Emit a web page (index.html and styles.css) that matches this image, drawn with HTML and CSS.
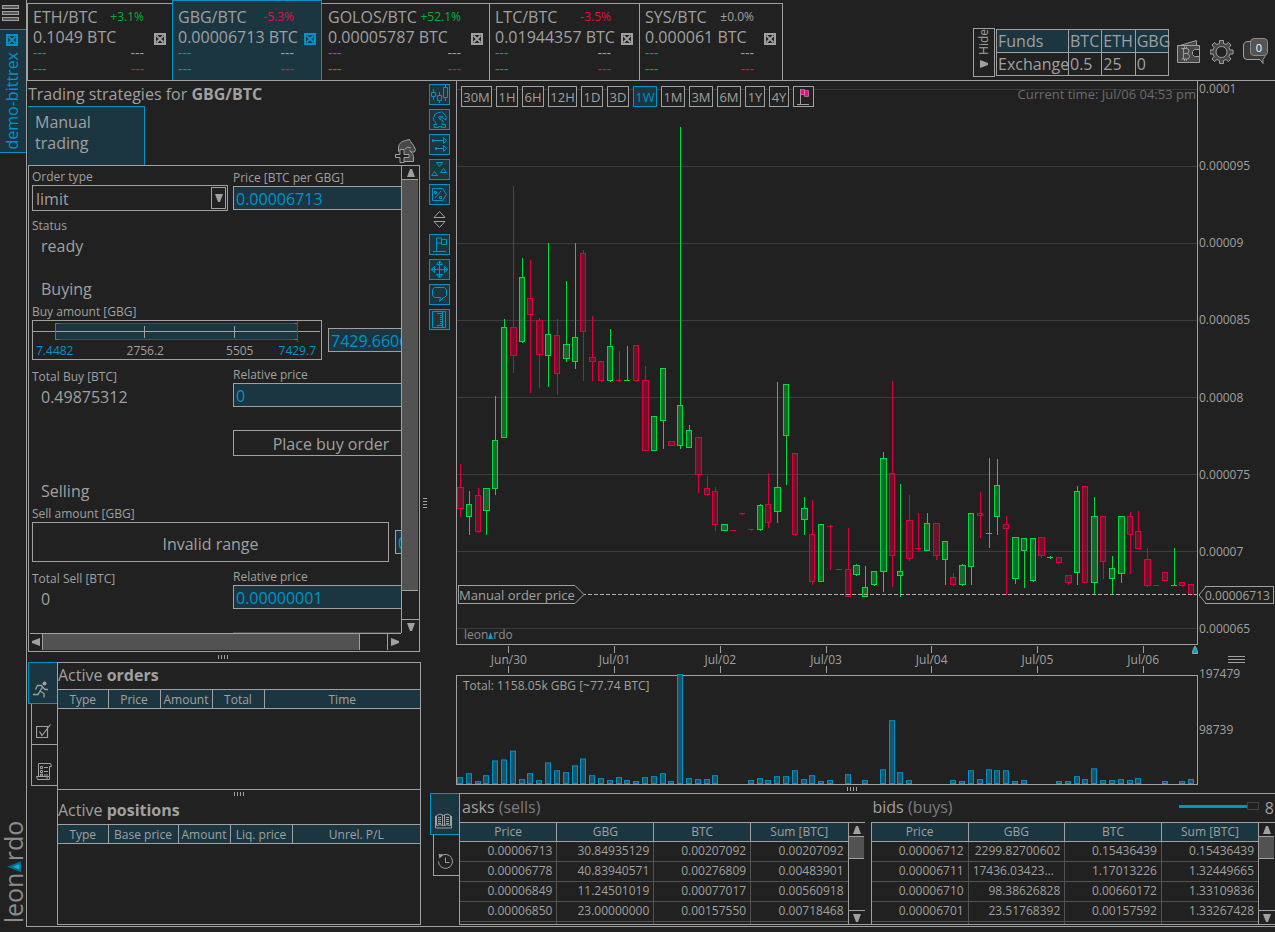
FILE: index.html
```html
<!DOCTYPE html>
<html lang="en">
<head>
<meta charset="utf-8">
<title>Leonardo – GBG/BTC</title>
<link rel="stylesheet" href="styles.css">
</head>
<body>
<svg class="defs" width="0" height="0" aria-hidden="true">
  <symbol id="i-close" viewBox="0 0 12 12"><path d="M1 1h10v10h-10z" fill="none" stroke="currentColor" stroke-width="2" shape-rendering="crispEdges"/><path d="M2.5 2.5l7 7M9.5 2.5l-7 7" stroke="currentColor" stroke-width="1.8"/></symbol>
  <symbol id="i-up" viewBox="0 0 8 8"><path d="M3 0h2l3 8h-8z" fill="currentColor"/></symbol>
  <symbol id="i-down" viewBox="0 0 8 8"><path d="M0 0h8l-3 8h-2z" fill="currentColor"/></symbol>
  <symbol id="i-left" viewBox="0 0 8 8"><path d="M8 0v8l-8 -3v-2z" fill="currentColor"/></symbol>
  <symbol id="i-right" viewBox="0 0 8 8"><path d="M0 0v8l8 -3v-2z" fill="currentColor"/></symbol>
  <symbol id="i-book" viewBox="0 0 17 16"><g fill="none" stroke="currentColor"><path d="M1.500 2.500q3.500-3 7 0q3.500-3 7 0v10q-3.500-1.500-7 0q-3.500-1.500-7 0zM7.500 2v11M9.500 2v11M.500 3v12h16v-12"/><path d="M3 4.500h3M3 6.500h3M3 8.500h3M11 4.500h3M11 6.500h3M11 8.500h3M3 10.500h3M11 10.500h3"/></g></symbol>
  <symbol id="i-history" viewBox="0 0 17 17"><path d="M3.500 3.500a7 7 0 1 1-2 5M8.500 4.500v5h4" fill="none" stroke="currentColor"/><path d="M1.500 1l5 .5l-4 4z" fill="currentColor"/></symbol>
</svg>
<div class="page">
  <aside class="rail">
    <button class="menu" aria-label="Menu"><span></span><span></span><span></span></button>
    <div class="account">
      <button class="close" aria-label="Close account"><svg width="12" height="12"><use href="#i-close"/></svg></button>
      <a class="account-name" href="#account">demo-bittrex</a>
    </div>
    <div class="logo"><span>leon</span><svg width="14" height="11" viewBox="0 0 14 11"><path d="M0 0V11L14 5.500z" fill="#00708f"/><path d="M2 3v5l6-2.500z" fill="#00b4e6"/></svg><span>rdo</span></div>
  </aside>

  <div class="app">
    <header class="header">
      <nav class="pairs">
        <div class="pair w-145"><div class="pair-info"><div class="row"><a href="#eth">ETH/BTC</a><small class="up">+3.1%</small></div><div class="rate">0.1049 BTC</div><div class="row dash"><span class="blue">---</span><span>---</span></div><div class="row dash"><span class="up">---</span><span class="down">---</span></div></div><button class="close" aria-label="Close ETH/BTC"><svg width="12" height="12"><use href="#i-close"/></svg></button></div>
        <div class="pair active w-150"><div class="pair-info"><div class="row"><a href="#gbg">GBG/BTC</a><small class="down">-5.3%</small></div><div class="rate">0.00006713 BTC</div><div class="row dash"><span class="blue">---</span><span>---</span></div><div class="row dash"><span class="up">---</span><span class="down">---</span></div></div><button class="close" aria-label="Close GBG/BTC"><svg width="12" height="12"><use href="#i-close"/></svg></button></div>
        <div class="pair w-167"><div class="pair-info"><div class="row"><a href="#golos">GOLOS/BTC</a><small class="up">+52.1%</small></div><div class="rate">0.00005787 BTC</div><div class="row dash"><span class="blue">---</span><span>---</span></div><div class="row dash"><span class="up">---</span><span class="down">---</span></div></div><button class="close" aria-label="Close GOLOS/BTC"><svg width="12" height="12"><use href="#i-close"/></svg></button></div>
        <div class="pair w-150"><div class="pair-info"><div class="row"><a href="#ltc">LTC/BTC</a><small class="down">-3.5%</small></div><div class="rate">0.01944357 BTC</div><div class="row dash"><span class="blue">---</span><span>---</span></div><div class="row dash"><span class="up">---</span><span class="down">---</span></div></div><button class="close" aria-label="Close LTC/BTC"><svg width="12" height="12"><use href="#i-close"/></svg></button></div>
        <div class="pair w-144"><div class="pair-info"><div class="row"><a href="#sys">SYS/BTC</a><small>±0.0%</small></div><div class="rate">0.000061 BTC</div><div class="row dash"><span class="blue">---</span><span>---</span></div><div class="row dash"><span class="up">---</span><span class="down">---</span></div></div><button class="close" aria-label="Close SYS/BTC"><svg width="12" height="12"><use href="#i-close"/></svg></button></div>
      </nav>
      <div class="status">
        <button class="hide-btn"><span>Hide</span><svg width="8" height="8"><use href="#i-right"/></svg></button>
        <table class="funds">
          <thead><tr><th class="w-72">Funds</th><th>BTC</th><th>ETH</th><th>GBG</th></tr></thead>
          <tbody><tr><td>Exchange</td><td>0.5</td><td>25</td><td>0</td></tr></tbody>
        </table>
        <button class="icon-btn" aria-label="Wallet"><svg width="24" height="24" viewBox="0 0 24 24"><g fill="#484848" stroke="#a0a0a0"><path d="M3 5.500L19.500 .5v5"/><path d="M.5 5.500h22v17h-22z"/><path d="M22.500 9.500h-5l-2 2v3l2 2h5z" fill="#212121"/><path d="M4.500 8.500h5q2.500 0 2.500 2.500t-2.500 2.500q3 0 3 3t-3 2.500h-5M6.500 8.500v10.500M6.500 13.500h3M7.500 6.500v2M9.500 6.500v2M7.500 19v2M9.500 19v2" fill="none"/></g></svg></button>
        <button class="icon-btn" aria-label="Settings"><svg width="24" height="24" viewBox="0 0 24 24"><path d="M9.500 .5h4v3l2.500 1l2.500-2l2.500 2.500l-2 2.500l1 2.500h3v4h-3l-1 2.500l2 2.500l-2.500 2.500l-2.500-2l-2.500 1v3h-4v-3l-2.500-1l-2.500 2l-2.500-2.500l2-2.500l-1-2.500h-3v-4h3l1-2.500l-2-2.500l2.500-2.500l2.500 2l2.500-1z" fill="#484848" stroke="#a0a0a0"/><circle cx="11.500" cy="12" r="5.500" fill="#212121" stroke="#a0a0a0"/></svg></button>
        <button class="icon-btn chat" aria-label="Messages"><svg width="24" height="24" viewBox="0 0 24 24"><path d="M5 1.500h14l3 3v12l-2 3v4l-3-4h-13q-3.500 0-3.500-3.500v-10q0-4.500 4.500-4.500z" fill="#383838" stroke="#a0a0a0"/></svg><span class="badge">0</span></button>
      </div>
    </header>

    <main class="main">
      <section class="left">
        <h2 class="title">Trading strategies for <b>GBG/BTC</b></h2>
        <div class="strategy-tabs">
          <button class="strategy-tab">Manual trading</button>
          <button class="icon-btn add" aria-label="Add strategy"><svg width="22" height="24" viewBox="0 0 22 24"><path d="M3.500 12.500V8q1-5.500 7-6.500l4-1l1 2l3 4l2 4l-1 2.500h-3l-2-1.500q4 3 4 6v5h-10" fill="#484848" stroke="#a0a0a0"/><path d="M10 10q2-3 6-1" fill="none" stroke="#a0a0a0"/><path d="M5 10.500h4v5h5v3h-5v5h-4v-5h-4.500v-3h4.500z" fill="#212121" stroke="#a0a0a0"/></svg></button>
        </div>
        <div class="panel scroll">
          <form class="view">
            <div class="cols">
              <div class="field"><label for="type">Order type</label><div class="select"><select id="type"><option>limit</option></select><span class="arrow"><svg width="8" height="8"><use href="#i-down"/></svg></span></div></div>
              <div class="field"><label for="price">Price [BTC per GBG]</label><input id="price" value="0.00006713"></div>
            </div>
            <div class="field state"><span class="cap">Status</span><output class="val">ready</output></div>
            <h3>Buying</h3>
            <label class="amount-label" for="buy">Buy amount [GBG]</label>
            <div class="amount">
              <div class="range">
                <svg class="track" viewBox="0 0 288 22" preserveAspectRatio="none"><path d="M22.500 2.500h242v16h-242z" fill="#1b3641" stroke="#0f6080"/><path d="M0 10.500h287M111.500 5v12M201.500 5v12" stroke="#a0a0a0"/><path d="M26 2.500h-3.500v16h3.500M261 2.500h3M261 18.500h3" fill="none" stroke="#0093c9"/><path d="M264.500 0v21" stroke="#e0008c"/></svg>
                <div class="scale"><span class="blue">7.4482</span><span>2756.2</span><span>5505</span><span class="blue">7429.7</span></div>
                <input type="range" aria-label="Buy amount" min="7" max="7430" value="7430">
              </div>
              <input id="buy" value="7429.66061">
            </div>
            <div class="cols total">
              <div class="field low"><span class="cap">Total Buy [BTC]</span><output class="val">0.49875312</output></div>
              <div class="field"><label for="rel1">Relative price</label><input id="rel1" value="0"></div>
            </div>
            <div class="cols action"><button type="button" class="order">Place buy order</button></div>
            <h3 class="sell">Selling</h3>
            <label class="amount-label" for="sell">Sell amount [GBG]</label>
            <div class="amount">
              <div class="invalid">Invalid range</div>
              <input id="sell" value="0">
            </div>
            <div class="cols total">
              <div class="field low"><span class="cap">Total Sell [BTC]</span><output class="val">0</output></div>
              <div class="field"><label for="rel2">Relative price</label><input id="rel2" value="0.00000001"></div>
            </div>
            <div class="cols action"><button type="button" class="order" disabled aria-label="Sell"></button></div>
          </form>
          <div class="vbar"><button aria-label="Up"><svg width="8" height="8"><use href="#i-up"/></svg></button><div class="thumb"></div><div class="rest"></div><button class="end" aria-label="Down"><svg width="8" height="8"><use href="#i-down"/></svg></button></div>
          <div class="hbar"><button aria-label="Left"><svg width="8" height="8"><use href="#i-left"/></svg></button><div class="thumb"></div><div class="rest"></div><button class="end" aria-label="Right"><svg width="8" height="8"><use href="#i-right"/></svg></button></div>
        </div>
        <div class="grip"></div>
        <div class="tabbed orders">
          <nav class="side-tabs">
            <button class="active" aria-label="Active orders"><svg width="16" height="17" viewBox="0 0 16 17"><circle cx="11.500" cy="2.500" r="2" fill="#a0a0a0"/><path d="M2.500 8.500l2-4h4l1 1.500l-2.500 4l4 2.500v4M9.500 6l2.500 2.500h3M7 10l-2 3.500h-5" fill="none" stroke="#a0a0a0" stroke-width="1.300"/></svg></button>
            <button aria-label="Completed orders"><svg width="16" height="15" viewBox="0 0 16 15"><path d="M.5 2.500h11v11h-11zM3.500 7.500l2.500 4l8.500-11" fill="none" stroke="#a0a0a0" stroke-width="1.200"/></svg></button>
            <button aria-label="Log"><svg width="16" height="17" viewBox="0 0 16 17"><path d="M2.500 13.500v-13h12l1 3h-2v10M.5 13.500h10l1 3h-10zM10.500 13.500h3v3h-2M4.500 3.500h2v2h-2zM4.500 7.500h2v2h-2zM4.500 11h2v2h-2zM8 4.500h4M8 8.500h4M8 12h4" fill="none" stroke="#a0a0a0"/></svg></button>
          </nav>
          <div class="order-lists">
            <div class="list">
              <h2 class="title">Active <b>orders</b></h2>
              <table class="heads"><thead><tr><th class="w-51">Type</th><th class="w-52">Price</th><th class="w-52">Amount</th><th class="w-52">Total</th><th>Time</th></tr></thead></table>
            </div>
            <div class="list second">
              <div class="grip"></div>
              <h2 class="title">Active <b>positions</b></h2>
              <table class="heads"><thead><tr><th class="w-51">Type</th><th class="w-70">Base price</th><th class="w-52">Amount</th><th class="w-62">Liq. price</th><th>Unrel. P/L</th></tr></thead></table>
            </div>
          </div>
        </div>
      </section>

      <div class="vgrip"><i></i></div>

      <section class="right">
        <div class="chart">
          <div class="tools">
            <button aria-label="Candles"><svg viewBox="0 0 19 19"><path d="M.5 7.500h4v4h-4zM6.500 10.500h4v5h-4zM12.500 2.500h4v10h-4zM2.500 4v3M2.500 12v3M8.500 7v3M8.500 16v2M14.500 0v2M14.500 13v3" transform="translate(1)"/></svg></button>
            <button aria-label="Strategy"><svg viewBox="0 0 19 19"><path d="M5.500 12.500q-2.500-2-2-5q1-4.500 5-5h2l1-1l1 1l3.500 3v4.500l-4-2.500l-3 1l4 2.500v1.500l-1 1v1h3.500v3h-4v-1h-3v1h-4.500v-3h2.500zM8 7.500q2-2 5-1"/></svg></button>
            <button aria-label="Order lines"><svg viewBox="0 0 19 19"><path d="M4 5.500h9M7 13.500h6M2.500 4.500h1v2h-1zM5.500 12.500h1v2h-1zM13.500 2.500l3 3l-3 3zM13.500 10.500l3 3l-3 3z"/></svg></button>
            <button aria-label="Trades"><svg viewBox="0 0 19 19"><path d="M6.500 2.500h6l-3 4zM1.500 15.500h6l-3-4zM10.500 12.500h6l-3-4z"/></svg></button>
            <button aria-label="Price tags"><svg viewBox="0 0 19 19"><path d="M2.500 3.500h10l4 6l-4 6h-10zM5 13l6-7M4.500 6.500h2v2h-2zM9.500 11.500h2v2h-2z"/></svg></button>
            <button class="plain" aria-label="Scale"><svg viewBox="0 0 19 19"><path d="M4 7.500h11l-5.500-6zM4 11.500h11l-5.500 6z"/></svg></button>
            <button aria-label="Flags"><svg viewBox="0 0 19 19"><path d="M3 16.500h13M6.500 16v-13h5v5h-5M11.500 4.500h5v5h-5z"/></svg></button>
            <button aria-label="Crosshair"><svg viewBox="0 0 19 19"><path d="M9.500 1v17M1 9.500h17M6.500 4.500h6l-3-3.500zM6.500 14.500h6l-3 3.500zM4.500 6.500v6l-3.500-3zM14.500 6.500v6l3.500-3z"/></svg></button>
            <button aria-label="Comments"><svg viewBox="0 0 19 19"><path d="M4.500 2.500h10l2 2v6l-2 2h-1l-4 4l1-4h-6l-2-2v-6z"/></svg></button>
            <button aria-label="Ruler"><svg viewBox="0 0 19 19"><path d="M2.500 1.500h13v16h-13zM12.500 2v15M7 3.500h5M10 5.500h2M10 7.500h2M10 9.500h2M10 11.500h2M10 13.500h2M7 15.500h5"/></svg></button>
          </div>
          <div class="plot">
            <svg id="candles" viewBox="0 0 740 563" preserveAspectRatio="none"></svg>
            <div class="periods">
              <button class="w-31">30M</button><button class="w-22">1H</button><button class="w-22">6H</button><button class="w-29">12H</button><button class="w-22">1D</button><button class="w-22">3D</button><button class="w-24 active">1W</button><button class="w-24">1M</button><button class="w-24">3M</button><button class="w-24">6M</button><button class="w-20">1Y</button><button class="w-20">4Y</button><button class="w-21" aria-label="News"><svg width="15" height="17" viewBox="0 0 15 17"><path d="M4.500 1v15M1 16.500h12" stroke="#a0a0a0"/><path d="M4.500 1.500h4v5h-4zM8.500 2.500h4v6h-4z" fill="#ff0096" stroke="#d090b0" stroke-width=".6"/></svg></button>
            </div>
            <div class="clock">Current time: Jul/06 04:53 pm</div>
            <div class="tag"><span>Manual order price</span><svg width="9" height="19" viewBox="0 0 9 19"><path d="M0 .5l9 9l-9 9" fill="#212121" stroke="#a0a0a0"/></svg></div>
            <div class="mark">leon<svg width="5" height="7" viewBox="0 0 5 7"><path d="M0 7h5l-2.500-7z" fill="#00a0d0"/></svg>rdo</div>
          </div>
          <div class="prices">
            <span>0.0001</span><span>0.000095</span><span>0.00009</span><span>0.000085</span><span>0.00008</span><span>0.000075</span><span>0.00007</span><span>0.000065</span>
            <div class="price-tag"><svg width="8" height="18" viewBox="0 0 8 18"><path d="M8 .5h-1l-7 8.500l7 8.500h1" fill="#212121" stroke="#a0a0a0"/></svg><span>0.00006713</span></div>
          </div>
          <div class="days"><span>Jun/30</span><span>Jul/01</span><span>Jul/02</span><span>Jul/03</span><span>Jul/04</span><span>Jul/05</span><span>Jul/06</span>
            <svg class="now" width="6" height="8" viewBox="0 0 6 8"><path d="M.5 7.500h5v-2l-2-5h-1l-2 5z" fill="#00a0d0" stroke="#a0a0a0"/></svg></div>
          <button class="axis-menu" aria-label="Chart menu"><span></span><span></span><span></span></button>
          <div class="volume">
            <svg id="bars" viewBox="0 0 740 110" preserveAspectRatio="none"></svg>
            <span>Total: 1158.05k GBG [~77.74 BTC]</span>
          </div>
          <div class="vol-axis"><span>197479</span><span>98739</span></div>
        </div>
        <div class="grip"></div>
        <div class="tabbed book">
          <nav class="side-tabs">
            <button class="active" aria-label="Order book"><svg width="17" height="16"><use href="#i-book"/></svg></button>
            <button aria-label="History"><svg width="17" height="17"><use href="#i-history"/></svg></button>
          </nav>
          <div class="books">
            <div class="side">
              <div class="side-head"><h2>asks <span>(sells)</span></h2></div>
              <div class="side-body">
                <div class="sheet"><table><thead><tr><th>Price</th><th>GBG</th><th>BTC</th><th>Sum [BTC]</th></tr></thead>
                <tbody>
                <tr><td>0.00006713</td><td>30.84935129</td><td>0.00207092</td><td>0.00207092</td></tr>
                <tr><td>0.00006778</td><td>40.83940571</td><td>0.00276809</td><td>0.00483901</td></tr>
                <tr><td>0.00006849</td><td>11.24501019</td><td>0.00077017</td><td>0.00560918</td></tr>
                <tr><td>0.00006850</td><td>23.00000000</td><td>0.00157550</td><td>0.00718468</td></tr>
                <tr><td></td><td></td><td></td><td></td></tr>
                </tbody></table></div>
                <div class="vbar small"><button aria-label="Up"><svg width="8" height="8"><use href="#i-up"/></svg></button><div class="thumb"></div><div class="rest"></div><button class="end" aria-label="Down"><svg width="8" height="8"><use href="#i-down"/></svg></button></div>
              </div>
            </div>
            <div class="side">
              <div class="side-head"><h2>bids <span>(buys)</span></h2><div class="depth"><input id="depth" type="range" min="1" max="8" value="8" aria-label="Precision"><label for="depth">8</label></div></div>
              <div class="side-body">
                <div class="sheet"><table><thead><tr><th>Price</th><th>GBG</th><th>BTC</th><th>Sum [BTC]</th></tr></thead>
                <tbody>
                <tr><td>0.00006712</td><td>2299.82700602</td><td>0.15436439</td><td>0.15436439</td></tr>
                <tr><td>0.00006711</td><td class="cut">17436.03423...</td><td>1.17013226</td><td>1.32449665</td></tr>
                <tr><td>0.00006710</td><td>98.38626828</td><td>0.00660172</td><td>1.33109836</td></tr>
                <tr><td>0.00006701</td><td>23.51768392</td><td>0.00157592</td><td>1.33267428</td></tr>
                <tr><td></td><td></td><td></td><td></td></tr>
                </tbody></table></div>
                <div class="vbar small"><button aria-label="Up"><svg width="8" height="8"><use href="#i-up"/></svg></button><div class="thumb"></div><div class="rest"></div><button class="end" aria-label="Down"><svg width="8" height="8"><use href="#i-down"/></svg></button></div>
              </div>
            </div>
          </div>
        </div>
      </section>
    </main>
  </div>
</div>
<script src="chart.js"></script>
</body>
</html>
```
FILE: styles.css
```css
:root {
  --bg: #212121;
  --line: #a0a0a0;
  --text: #a0a0a0;
  --blue: #0093c9;
  --teal: #1b3641;
  --thumb: #525252;
  --green: #00b432;
  --red: #e0103c;
}
* { box-sizing: border-box; }
body {
  margin: 0;
  background: var(--bg);
  color: var(--text);
  font: 16px/20px "Open Sans", "Noto Sans", sans-serif;
}
button, input, select { font: inherit; color: inherit; margin: 0; padding: 0; border-radius: 0; }
button { background: none; border: 0; cursor: pointer; }
a { color: inherit; text-decoration: none; }
h2, h3 { margin: 0; font-size: 16px; font-weight: 400; }
svg { display: block; flex: none; }
table { border-collapse: collapse; }
th { font-weight: 400; }
.defs { position: absolute; }
.blue { color: var(--blue); }
.up { color: var(--green); }
.down { color: var(--red); }

.page { display: flex; height: 100vh; min-height: 800px; padding-bottom: 5px; }
.rail { width: 26px; flex: none; display: flex; flex-direction: column; }
.menu { display: grid; gap: 2px; padding: 5px 7px 0 2px; height: 29px; align-content: start; }
.menu span { height: 4px; border: 1px solid var(--line); background: #555; }
.account { height: 124px; border: solid var(--blue); border-width: 1px 0; background: var(--teal); color: var(--blue); padding: 4px 3px 0 0; display: flex; flex-direction: column; align-items: center; gap: 6px; }
.account-name { writing-mode: vertical-rl; transform: rotate(180deg); line-height: 22px; }
.close { height: 12px; color: var(--line); }
.account .close, .active .close { color: var(--blue); }
.logo { margin-top: auto; padding-top: 4px; writing-mode: vertical-rl; transform: rotate(180deg); display: flex; align-items: center; font: 25px/26px "Open Sans", sans-serif; color: #8c8c8c; }
.logo svg { margin-right: 3px; }

.app { flex: 1; min-width: 0; display: flex; flex-direction: column; border: solid var(--line); border-width: 0 0 1px 1px; }
.header { height: 81px; flex: none; display: flex; justify-content: space-between; border-bottom: 1px solid var(--line); }
.pairs { display: flex; align-items: flex-end; }
.pair { display: flex; height: 77px; border: solid var(--line); border-width: 1px 0 0 1px; padding: 3px 6px 0 5px; gap: 10px; }
.pair:last-child { border-right-width: 1px; }
.pair.active { height: 80px; padding: 6px 5px 0; background: var(--teal); border-color: var(--blue); border-right-width: 1px; }
.pair.active + .pair { border-left: 0; padding-left: 6px; }
.pair .close { margin-top: 26px; }
.pair-info { flex: 1; min-width: 0; white-space: nowrap; }
.row { display: flex; justify-content: space-between; }
.row small { font-size: 12px; }
.dash { font-size: 14px; line-height: 16px; }
.rate { height: 18px; }
.w-144 { width: 144px; } .w-145 { width: 145px; } .w-150 { width: 150px; } .w-167 { width: 167px; }
.status { display: flex; align-items: center; padding: 24px 8px 0 0; }
.hide-btn { width: 22px; height: 49px; border: 1px solid var(--line); display: flex; flex-direction: column; align-items: center; justify-content: space-between; font-size: 12px; padding-bottom: 8px; margin-right: 1px; }
.hide-btn span { writing-mode: vertical-rl; transform: rotate(180deg); }
.funds { width: 173px; table-layout: fixed; margin-right: 8px; }
.funds th, .funds td { height: 23px; border: 1px solid var(--line); padding: 1px 0 0 1px; text-align: left; line-height: 21px; }
.funds th { background: var(--teal); }
.w-72 { width: 72px; }
.icon-btn { position: relative; margin-right: 9px; }
.icon-btn:last-child { margin-right: 0; }
.badge { position: absolute; right: -1px; top: -2px; width: 18px; height: 18px; border: 1px solid #8a8a8a; border-radius: 4px; background: #555; color: #fff; font-size: 11px; line-height: 17px; }

.main { flex: 1; min-height: 0; display: flex; padding: 0 0 1px 1px; }
.left { width: 393px; flex: none; display: flex; flex-direction: column; }
.title { line-height: 26px; height: 25px; flex: none; }
.strategy-tabs { height: 59px; flex: none; display: flex; justify-content: space-between; align-items: flex-end; }
.strategy-tab { width: 117px; height: 59px; background: var(--teal); border: solid var(--blue); border-width: 1px 1px 0 0; text-align: left; padding: 4px 50px 11px 7px; line-height: 21px; }
.strategy-tabs .add { margin-right: 4px; margin-bottom: 2px; }
.panel { border: 1px solid var(--line); width: 392px; flex: 1; min-height: 0; }
.scroll { display: grid; grid-template-columns: 1fr 18px; grid-template-rows: 1fr 18px; padding: 0 0 0 1px; }
.view { overflow: hidden; min-height: 0; padding: 3px 0 0 2px; }
.vbar, .hbar { display: flex; }
.vbar { flex-direction: column; border-left: 1px solid var(--line); }
.hbar { border-top: 1px solid var(--line); padding-bottom: 1px; }
.vbar button, .hbar button { display: grid; place-items: center; flex: none; }
.vbar button { height: 13px; }
.hbar button { width: 12px; }
.vbar .thumb { flex: 412; background: var(--thumb); border: solid var(--line); border-width: 1px 0; margin-right: 1px; }
.vbar .rest { flex: 28; }
.vbar .end { border-top: 1px solid var(--line); height: 14px; }
.hbar .thumb { flex: 319; background: var(--thumb); border: solid var(--line); border-width: 0 1px; }
.hbar .rest { flex: 27; }
.hbar .end { border-left: 1px solid var(--line); width: 14px; }
.cols { display: grid; grid-template-columns: 196px 196px; gap: 5px; align-items: center; }
.field { display: flex; flex-direction: column; }
label, .cap { font-size: 12px; line-height: 16px; }
.view input { height: 24px; width: 100%; background: var(--teal); border: 1px solid var(--line); color: var(--blue); padding: 2px 2px 0; }
.select { display: flex; border: 1px solid var(--line); height: 26px; }
.select select { appearance: none; flex: 1; background: none; border: 0; padding: 2px 3px 0; }
.arrow { width: 15px; border: 1px solid var(--line); margin: 1px; display: grid; place-items: center; }
.state { margin-top: 7px; }
.val { line-height: 24px; padding-left: 9px; }
h3 { line-height: 24px; padding-left: 9px; margin: 19px 0 3px; }
h3.sell { margin-top: 23px; }
.amount-label { display: block; }
.amount { display: flex; align-items: center; gap: 6px; }
.amount > input { width: 130px; flex: none; }
.range { width: 290px; flex: none; height: 40px; border: 1px solid var(--line); position: relative; }
.track { width: 100%; height: 22px; shape-rendering: crispEdges; }
.scale { display: flex; justify-content: space-between; font-size: 12px; line-height: 16px; padding: 0 5px 0 3px; }
.scale span:nth-child(2) { padding-left: 28px; }
.scale span:nth-child(3) { padding-left: 37px; }
.view .range input { position: absolute; inset: 0; height: 100%; opacity: 0; }
.invalid { width: 357px; flex: none; height: 40px; border: 1px solid var(--line); text-align: center; line-height: 42px; }
.total { margin-top: 7px; align-items: start; }
.low { padding-top: 2px; }
.action { margin-top: 21px; }
.order { grid-column: 2; height: 26px; border: 1px solid var(--line); padding-top: 2px; }
.order:disabled { border-color: #484848; }

.grip { height: 10px; flex: none; display: grid; place-items: center; }
.grip::before { content: ""; width: 10px; height: 4px; background: repeating-linear-gradient(90deg, var(--line) 0 1px, transparent 1px 3px); }
.left > .grip { padding-right: 3px; }
.vgrip { width: 8px; display: grid; place-items: center; flex: none; }
.vgrip i { width: 4px; height: 10px; background: repeating-linear-gradient(var(--line) 0 1px, transparent 1px 3px); }

.tabbed { display: flex; flex: none; }
.orders { height: 263px; }
.side-tabs { display: flex; flex-direction: column; align-items: flex-end; width: 29px; }
.side-tabs button { width: 26px; height: 41px; border: solid var(--line); border-width: 0 0 1px 1px; display: grid; place-items: end center; padding: 0 2px 5px 0; }
.side-tabs .active { width: 29px; height: 42px; background: var(--teal); border: 1px solid var(--blue); border-right: 0; padding-right: 4px; }
.order-lists { flex: 1; border: 1px solid var(--line); display: flex; flex-direction: column; }
.list { flex: 126; }
.second { flex: 135; border-top: 1px solid var(--line); }
.second .grip { height: 8px; }
.list > .title { height: 26px; line-height: 24px; }
.heads { width: 100%; table-layout: fixed; }
.heads th { height: 18px; border: solid var(--line); border-width: 1px 0 1px 1px; background: var(--teal); font-size: 12px; line-height: 17px; padding: 1px 0 0; }
.heads th:first-child { border-left: 0; }
.w-51 { width: 50px; } .w-52 { width: 52px; } .w-62 { width: 62px; } .w-70 { width: 70px; }

.right { flex: 1; min-width: 0; display: flex; flex-direction: column; }
.chart { flex: 1; min-height: 0; display: grid; grid-template-columns: 27px 1fr 77px; grid-template-rows: 1fr 30px 110px; }
.tools { grid-row: 1 / 4; display: flex; flex-direction: column; gap: 4px; padding-top: 3px; align-items: flex-start; }
.tools button { width: 21px; height: 21px; border: 1px solid var(--blue); background: var(--teal); color: var(--blue); }
.tools .plain { border-color: transparent; background: none; color: var(--line); }
.tools svg { width: 19px; height: 19px; fill: none; stroke: currentColor; }
.plot { position: relative; border: solid var(--line); border-width: 0 1px 1px; }
#candles, #bars { position: absolute; inset: 0; width: 100%; height: 100%; shape-rendering: crispEdges; overflow: visible; }
.grid { stroke: #3c3c3c; }
.gain { stroke: #00dc3c; fill: #00dc3c; }
.loss { stroke: #dc003c; fill: #dc003c; }
.gain rect, .loss rect { fill-opacity: .4; }
.order-line { stroke: #b0b0b0; stroke-dasharray: 4 2; }
.bar { fill: #14566c; stroke: var(--blue); }
.periods { position: absolute; left: 4px; top: 5px; display: flex; gap: 4px; }
.periods button { height: 21px; border: 1px solid var(--line); background: var(--bg); font-size: 13px; line-height: 20px; display: grid; place-items: center; }
.periods .active { color: var(--blue); border-color: var(--blue); background: var(--teal); }
.w-20 { width: 20px; } .w-21 { width: 21px; } .w-22 { width: 22px; } .w-24 { width: 24px; } .w-29 { width: 29px; } .w-31 { width: 31px; }
.clock { position: absolute; right: 1px; top: 4px; font-size: 13px; line-height: 18px; color: #6c6c6c; }
.tag { position: absolute; left: 1px; bottom: 40px; display: flex; font-size: 13px; line-height: 19px; }
.tag span { height: 19px; border: solid var(--line); border-width: 1px 0 1px 1px; background: var(--bg); }
.mark { position: absolute; left: 7px; bottom: 0; display: flex; align-items: center; font-size: 12px; line-height: 18px; color: #8c8c8c; }
.prices { position: relative; display: grid; grid-template-rows: repeat(7, 77fr) 24fr; font-size: 12px; line-height: 16px; padding-left: 1px; }
.price-tag { position: absolute; left: 1px; bottom: 41px; display: flex; background: var(--bg); }
.price-tag span { height: 18px; border: solid var(--line); border-width: 1px 1px 1px 0; padding-right: 3px; line-height: 18px; }
.price-tag svg { margin-right: -2px; }
.days { position: relative; display: flex; padding-right: 2px; font-size: 12px; line-height: 13px; }
.days span { flex: 1; display: flex; flex-direction: column; align-items: center; padding-top: 1px; }
.days span::before, .days span::after { content: ""; width: 1px; height: 7px; background: var(--line); }
.now { position: absolute; right: 0; top: 1px; }
.axis-menu { display: grid; gap: 2px; align-content: center; justify-content: center; padding-bottom: 1px; }
.axis-menu span { width: 17px; height: 1px; background: var(--line); }
.volume { position: relative; border: 1px solid var(--line); font-size: 12px; line-height: 20px; padding-left: 6px; }
.volume span { position: relative; }
.vol-axis { display: grid; align-content: start; gap: 40px; font-size: 12px; line-height: 16px; padding-left: 1px; margin-top: -9px; }
.right > .grip { height: 8px; }
.book { height: 132px; margin-left: 1px; }
.books { flex: 1; min-width: 0; display: flex; gap: 6px; border: solid var(--line); border-width: 1px 0 1px 1px; }
.side { flex: 1; min-width: 0; display: flex; flex-direction: column; }
.side-head { height: 28px; display: flex; justify-content: space-between; padding: 0 1px 0 2px; line-height: 26px; }
.side-head h2 span { color: #7c7c7c; }
.side-body { flex: 1; min-height: 0; display: flex; overflow: hidden; border-top: 1px solid var(--line); }
.side + .side .side-body { border-left: 1px solid var(--line); }
.sheet { flex: 1; min-width: 0; }
.sheet table { width: 100%; table-layout: fixed; font-size: 12px; line-height: 18px; }
.sheet th, .sheet td { padding: 0 4px; border: solid #525252; border-width: 0 1px 1px 0; height: 20px; text-align: right; white-space: nowrap; }
.sheet .cut { text-align: left; }
.sheet th { background: var(--teal); border-color: var(--line); text-align: center; height: 18px; line-height: 17px; }
.sheet th:last-child, .sheet td:last-child { border-right: 0; }
.vbar.small { width: 17px; flex: none; }
.small .thumb { flex: 22; }
.small .rest { flex: 55; }
.depth { display: flex; align-items: center; gap: 6px; }
.depth label { font-size: 16px; line-height: 26px; }
.depth input { appearance: none; width: 80px; height: 8px; background: linear-gradient(var(--blue), var(--blue)) 0 3px / 68px 3px no-repeat; margin-bottom: 5px; }
.depth input::-webkit-slider-thumb { appearance: none; width: 12px; height: 8px; border: 1px solid #444; background: var(--bg); }
```
FILE: chart.js
```js
// Candles: [direction, high, body top, body bottom, low] in plot units.
const candles = [
  ["r",383,406,428,436],["g",410,423,436,454],["r",407,414,451,452],["g",407,407,430,454],["g",315,359,408,414],
  ["g",238,246,357,357],["r",105,246,275,292],["g",177,196,261,262],["r",179,217,234,312],["r",237,239,274,307],
  ["g",162,253,275,306],["r",238,254,293,314],["g",200,263,278,281],["g",162,256,281,288],["r",169,172,251,300],
  ["r",235,276,281,300],["r",280,280,300,301],["g",248,265,300,301],["r",270,299,300,301],["g",265,299,300,300],
  ["r",264,264,300,301],["r",285,299,370,370],["g",335,335,370,370],["g",287,287,340,368],["r",360,360,365,365],
  ["g",46,324,365,368],["g",344,349,367,367],["r",356,356,394,412],["r",395,407,414,415],["r",406,410,444,450],
  ["g",443,443,450,450],["r",449,449,450,450],["r",432,432,433,434],["r",448,448,449,450],["g",423,424,449,450],
  ["r",392,423,442,447],["g",301,406,431,442],["g",303,303,355,404],["r",372,372,454,455],["g",416,427,439,454],
  ["r",419,453,501,504],["g",443,443,501,501],["r",444,445,446,489],["r",488,488,489,489],["r",447,488,516,516],
  ["g",483,484,494,495],["g",485,506,516,516],["g",490,490,504,505],["g",371,377,491,511],["r",300,392,475,506],
  ["g",403,490,495,516],["r",414,439,478,480],["r",432,467,468,470],["g",432,442,470,470],["r",442,442,475,479],
  ["g",460,460,479,504],["r",492,496,504,505],["g",483,484,504,505],["g",432,432,486,504],["r",411,432,435,457],
  ["g",377,452,453,467],["g",378,404,436,454],["r",435,443,448,514],["g",456,456,498,503],["g",457,457,470,507],
  ["g",457,457,500,501],["r",456,456,475,477],["g",475,476,477,478],["r",476,476,482,482],["r",494,494,502,504],
  ["g",405,410,492,504],["r",405,405,502,502],["g",416,435,502,513],["r",435,435,481,498],["g",475,487,498,513],
  ["g",435,435,493,502],["r",431,435,454,493],["r",430,450,468,468],["r",467,478,505,506],["r",504,504,505,505],
  ["r",491,491,500,500],["g",467,504,505,505],["r",501,501,505,506],["r",503,503,514,514]
];
const volumes = [
  5,9,1,7,22,23,32,3,9,2,20,12,10,17,24,7,4,2,5,2,1,5,6,9,1,110,4,3,3,7,0,0,0,2,4,2,6,6,12,3,7,1,
  2,0,8,0,2,0,13,63,10,2,0,0,0,0,2,1,12,3,13,12,12,1,2,0,0,0,1,1,6,3,14,2,2,3,2,4,0,0,1,0,1,3
];
const step = 740 / 84;
const left = i => Math.round(i * step) + 0.5;

let out = "";
for (let y = 8.5; y < 563; y += 77) out += `<path class="grid" d="M0 ${y}h740"/>`;
candles.forEach(([dir, high, top, bottom, low], i) => {
  const x = left(i), mid = x + 3;
  let shape = bottom - top < 2
    ? `<path d="M${x - 0.5} ${top + 0.5}h6"/>`
    : `<rect x="${x}" y="${top + 0.5}" width="${i % 3 ? 5 : 6}" height="${bottom - top - 1}"/>`;
  if (high < top) shape += `<path d="M${mid} ${high}V${top}"/>`;
  if (low > bottom) shape += `<path d="M${mid} ${bottom}V${low}"/>`;
  out += `<g class="${dir === "g" ? "gain" : "loss"}">${shape}</g>`;
});
out += '<path class="order-line" d="M125 513.5H740"/>';
document.getElementById("candles").innerHTML = out;

document.getElementById("bars").innerHTML = volumes.map((h, i) =>
  h ? `<rect class="bar" x="${left(i)}" y="${108.5 - h}" width="5" height="${h + 1}"/>` : ""
).join("");
```
